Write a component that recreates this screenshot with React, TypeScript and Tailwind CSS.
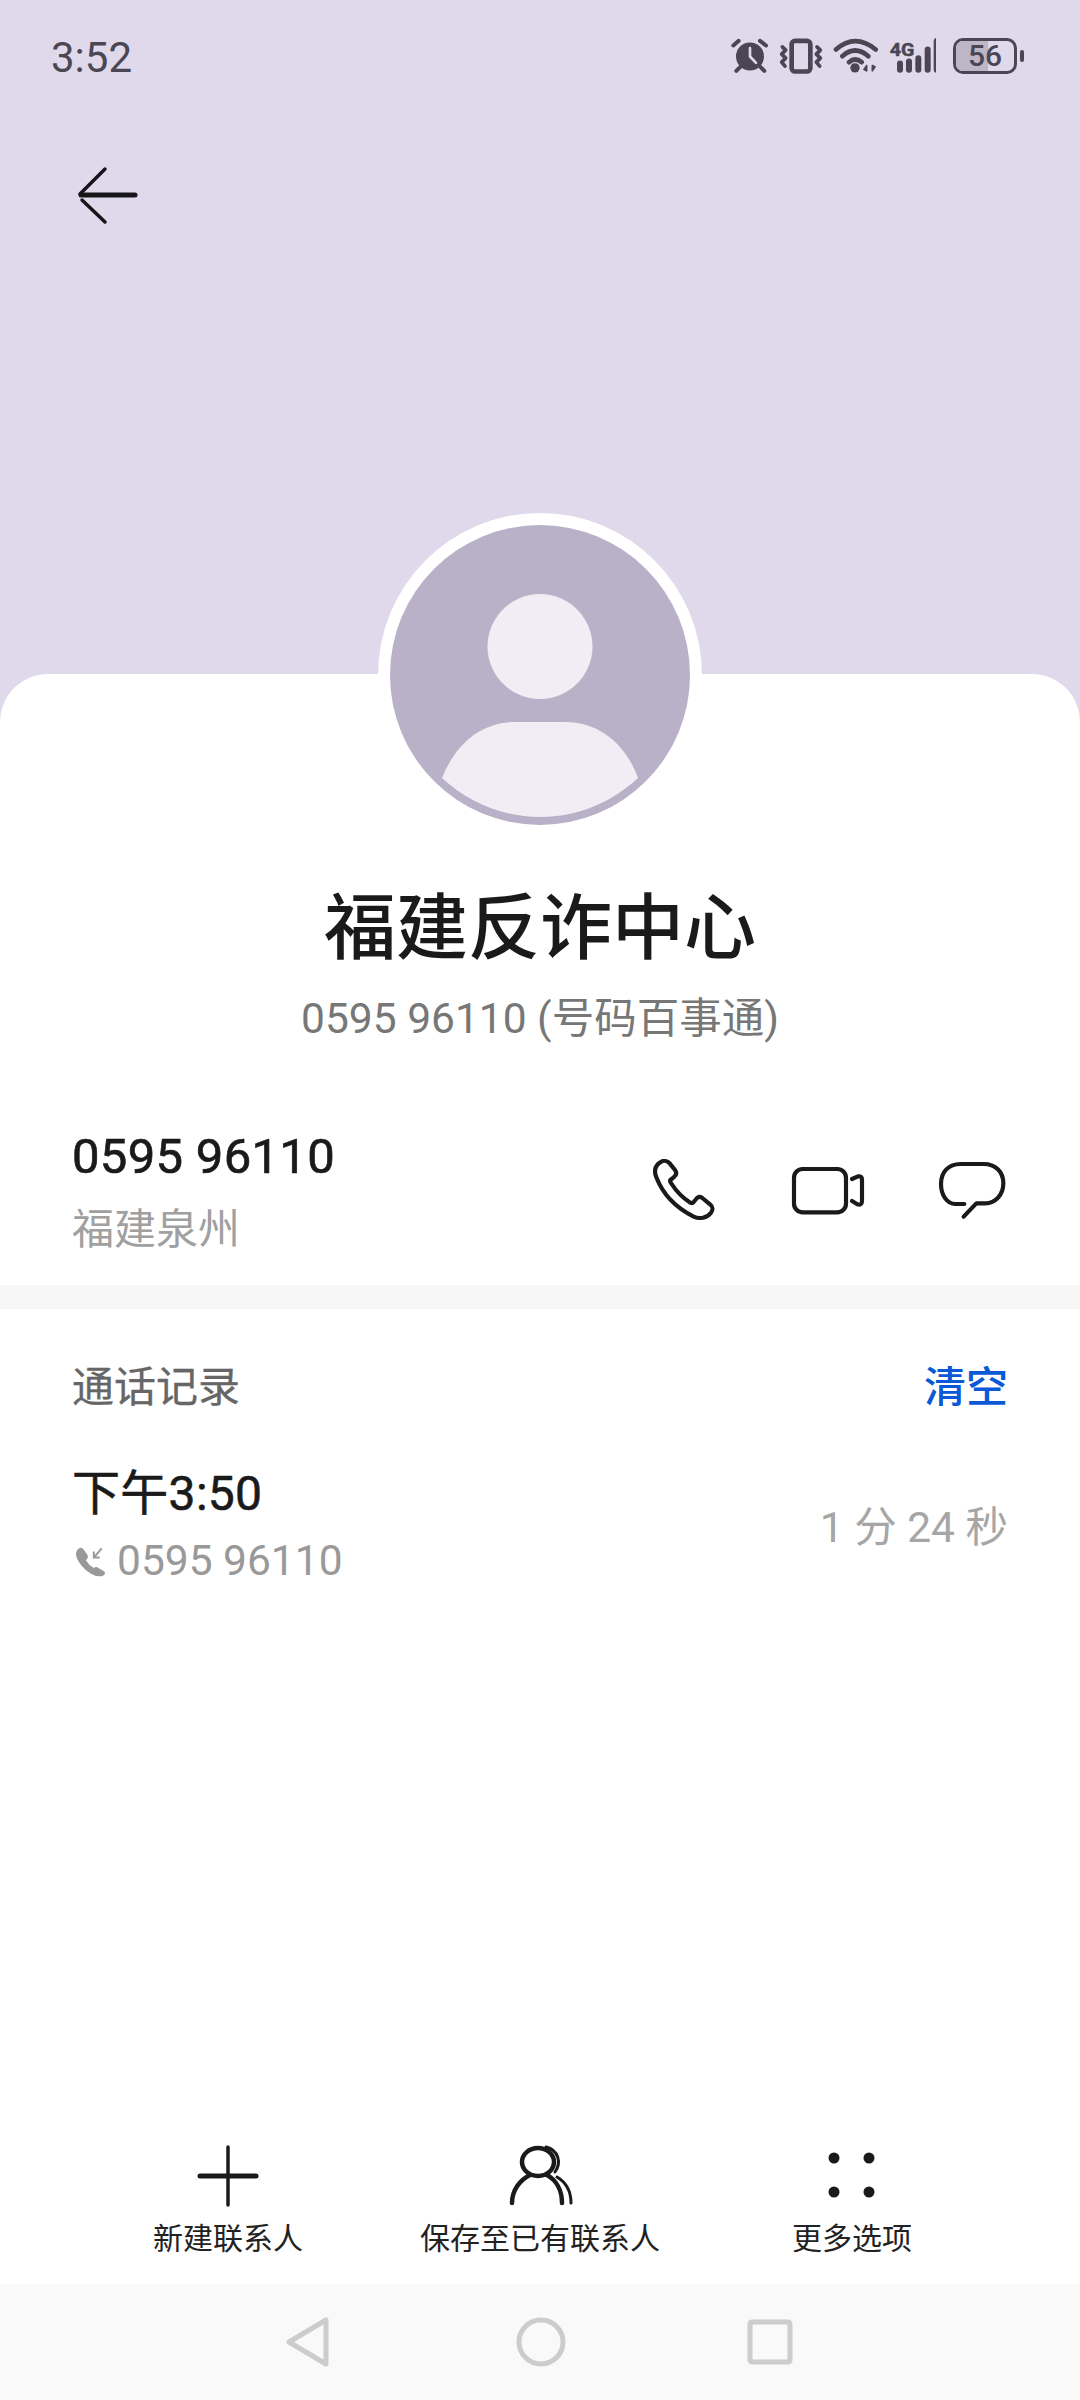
export default function App() {
  const cjk = "font-['Roboto','Noto_Sans_CJK_SC',sans-serif]";
  return (
    <div className={`relative w-[1080px] h-[2400px] flex flex-col overflow-hidden bg-[#e0d9ec] ${cjk}`}>
      {/* header */}
      <div className="h-[674px] shrink-0 flex flex-col">
        <div className="h-[116px] flex items-start justify-between pl-[51px] pr-[56px] pt-[34px]">
          <span className="text-[42px] leading-[48px] text-[#4a4654]">3:52</span>
          <div className="flex items-center mt-[3px]">
            <svg width="205" height="37" viewBox="90 55 615 110" fill="none" stroke="#4a4654" strokeLinecap="round" strokeLinejoin="round">
              {/* alarm */}
              <circle cx="147" cy="113" r="42" fill="#4a4654" stroke="none" />
              <path d="M147 88V113L165 132" stroke="#e0d9ec" strokeWidth="8" />
              <path d="M97 80L113 66M177 66L195 80M106 156L118 144M190 156L178 144" strokeWidth="12" />
              {/* vibrate */}
              <rect x="272" y="66" width="56" height="92" rx="10" strokeWidth="14" />
              <path d="M244 84L254 94L242 106L254 118L242 130L252 142" strokeWidth="11" />
              <path d="M348 84L358 94L346 106L358 118L346 130L356 142" strokeWidth="11" />
              {/* wifi */}
              <circle cx="462" cy="147" r="14" fill="#4a4654" stroke="none" />
              <path d="M405 92Q462 42 524 92M424 112Q462 78 502 112M444 130Q462 114 482 130" strokeWidth="14" />
              <path d="M497 156V140L489 152ZM514 140V156L522 144Z" fill="#4a4654" strokeWidth="5" />
              {/* signal */}
              <text x="566" y="112" fontFamily="Roboto" fontWeight="700" fontSize="54" fill="#4a4654" stroke="#4a4654" strokeWidth="1.5" textLength="74" lengthAdjust="spacingAndGlyphs">4G</text>
              <path d="M597 134V153M624 128V153M652 118V153M680 92V153M707 66V153" strokeWidth="18" />
            </svg>
            <div className="ml-[17px] relative w-[64px] h-[36px] rounded-[10px] border-[3px] border-[#4a4654] flex items-center justify-center">
              <div className="absolute left-0 top-0 bottom-0 w-[56%] rounded-l-[7px] bg-[#bcb6c6]" />
              <span className="relative text-[30px] leading-[30px] font-medium text-[#4a4654]">56</span>
            </div>
            <div className="ml-[3px] w-[4px] h-[12px] rounded-[2px] bg-[#4a4654]" />
          </div>
        </div>
        <div className="pl-[76px] pt-[49px]">
          <svg width="64" height="60" viewBox="76 165 64 60" fill="none" stroke="#16161a" strokeLinecap="round" className="block">
            <path d="M81 195H135" strokeWidth="5" />
            <path d="M105 169L80 194M82 200L105 222" strokeWidth="3.5" />
          </svg>
        </div>
      </div>

      {/* avatar */}
      <div className="absolute left-[378px] top-[513px] z-10 w-[324px] h-[324px] rounded-full bg-white p-[12px]">
        <svg width="300" height="300" viewBox="390 525 300 300" className="block">
          <circle cx="540" cy="675" r="150" fill="#b9b1c7" />
          <circle cx="540" cy="646.5" r="52.5" fill="#f0eef4" />
          <path d="M442 778C455 745 480 722 515 722H565C600 722 626 745 638 778C612 802 578 817 540 817C502 817 468 802 442 778Z" fill="#f0eef4" />
        </svg>
      </div>

      {/* card */}
      <div className="flex-1 flex flex-col bg-white rounded-t-[48px]">
        <div className="pt-[210px] flex flex-col items-center">
          <h1 className="text-[72px] leading-[90px] font-medium text-[#1a1a1a]">福建反诈中心</h1>
          <p className="text-[42.5px] leading-[60px] mt-[15px] text-[#777777]">0595 96110 (号码百事通)</p>
        </div>

        <div className="mt-[69px] h-[144px] pl-[72px] pr-[73px] flex items-center justify-between">
          <div className="flex flex-col mt-[4px]">
            <span className="text-[49px] leading-[64px] [-webkit-text-stroke:0.7px_#1a1a1a] tracking-[0.3px] text-[#1a1a1a]">0595 96110</span>
            <span className="text-[42px] leading-[60px] mt-[11px] text-[#a0a0a0]">福建泉州</span>
          </div>
          <div className="flex items-center">
            <svg width="62" height="62" viewBox="100 115 186 186" fill="none" stroke="#1a1a1a" strokeWidth="12.5" strokeLinejoin="round">
              <path d="M122 125C130 118 142 120 150 128L166 148C172 156 170 164 162 170L152 178C150 182 152 186 156 190C170 212 190 232 212 246C216 248 219 248 222 244L232 232C236 228 242 228 248 232L272 252C280 258 280 268 274 276C262 292 240 296 222 288C170 262 130 222 110 170C102 150 108 134 122 125Z" />
            </svg>
            <svg width="76" height="50" viewBox="510 130 228 150" fill="none" stroke="#1a1a1a" strokeWidth="12.5" strokeLinecap="round" strokeLinejoin="round" className="ml-[75px]">
              <rect x="522" y="142" width="156" height="130" rx="26" />
              <path d="M696 172L714 164Q726 162 726 174V238Q726 252 712 248L696 238" />
            </svg>
            <svg width="70" height="60" viewBox="950 120 210 180" fill="none" stroke="#1a1a1a" strokeWidth="12.5" strokeLinecap="round" strokeLinejoin="round" className="ml-[71px]">
              <path d="M1032 252H1005C980 252 962 225 962 192C962 155 985 132 1020 132H1090C1125 132 1149 155 1149 190C1149 225 1125 250 1095 250H1068L1030 290" />
            </svg>
          </div>
        </div>

        <div className="mt-[23px] h-[24px] bg-[#f7f7f7]" />

        <div className="mt-[49px] px-[72px] flex items-center justify-between h-[60px]">
          <span className="text-[42px] leading-[60px] [-webkit-text-stroke:0.3px_#666666] text-[#666666]">通话记录</span>
          <span className="text-[42px] leading-[60px] font-medium text-[#0a59d6]">清空</span>
        </div>

        <div className="mt-[46px] px-[72px] flex items-center justify-between">
          <div className="flex flex-col">
            <span className="text-[48px] leading-[60px] [-webkit-text-stroke:0.6px_#1a1a1a] tracking-[0.3px] text-[#1a1a1a]">下午3:50</span>
            <div className="flex items-center mt-[7px] h-[60px]">
              <svg width="33" height="33" viewBox="100 610 100 100" className="ml-[2px]">
                <path d="M108 628Q118 612 128 622L142 642Q144 650 136 656Q146 672 160 680Q168 674 174 680L192 690Q198 698 186 704Q170 708 150 696Q120 678 108 648Q104 636 108 628Z" fill="#999999" />
                <path d="M184 620L160 648M160 630V648H178" fill="none" stroke="#999999" strokeWidth="6" />
              </svg>
              <span className="ml-[10px] text-[42.5px] leading-[60px] text-[#999999]">0595 96110</span>
            </div>
          </div>
          <span className="text-[42.5px] leading-[60px] text-[#a6a6a6]">1 分 24 秒</span>
        </div>

        {/* actions */}
        <div className="mt-auto grid grid-cols-3 px-[72px] pb-[25px]">
          <div className="flex flex-col items-center">
            <svg width="66" height="66" viewBox="195 2143 66 66" fill="none" stroke="#1a1a1a" strokeLinecap="round">
              <path d="M200 2176H256" strokeWidth="5" />
              <path d="M228 2147V2205" strokeWidth="3.5" />
            </svg>
            <span className="text-[30px] leading-[40px] mt-[10px] text-[#222222]">新建联系人</span>
          </div>
          <div className="flex flex-col items-center">
            <svg width="70" height="66" viewBox="505 2143 70 66" fill="none" stroke="#1a1a1a" strokeLinecap="round">
              <ellipse cx="538" cy="2162" rx="16" ry="14" strokeWidth="4.5" />
              <path d="M512 2203C512 2190 520 2180 530 2175M562 2203C562 2190 556 2180 547 2175" strokeWidth="4.5" />
              <path d="M546 2147C558 2150 562 2162 555 2172M557 2177C567 2183 571 2192 571 2203" strokeWidth="3" />
            </svg>
            <span className="text-[30px] leading-[40px] mt-[10px] text-[#222222]">保存至已有联系人</span>
          </div>
          <div className="flex flex-col items-center">
            <svg width="66" height="66" viewBox="820 2143 66 66" fill="#1a1a1a">
              <circle cx="835" cy="2158" r="5.5" />
              <circle cx="870" cy="2158" r="5.5" />
              <circle cx="835" cy="2192" r="5.5" />
              <circle cx="870" cy="2192" r="5.5" />
            </svg>
            <span className="text-[30px] leading-[40px] mt-[10px] text-[#222222]">更多选项</span>
          </div>
        </div>

        {/* nav bar */}
        <div className="h-[116px] bg-[#f9f9f9] flex items-center justify-center pr-[3px]">
          <svg width="46" height="52" viewBox="286 2316 46 52" fill="none" stroke="#cccccc" strokeWidth="5" strokeLinejoin="round">
            <path d="M328 2320V2364L291 2342Z" />
          </svg>
          <svg width="50" height="50" viewBox="516 2317 50 50" fill="none" stroke="#cccccc" strokeWidth="5" className="ml-[185.5px]">
            <circle cx="541" cy="2342" r="22" />
          </svg>
          <svg width="46" height="46" viewBox="746 2319 46 46" fill="none" stroke="#cccccc" strokeWidth="5" strokeLinejoin="round" className="ml-[181.5px]">
            <rect x="749" y="2322" width="40" height="40" rx="2" />
          </svg>
        </div>
      </div>
    </div>
  );
}
